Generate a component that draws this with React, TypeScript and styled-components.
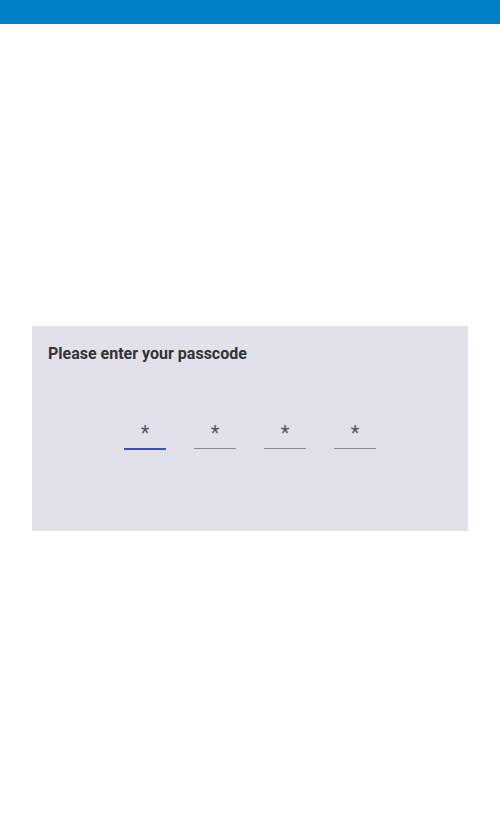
import React, { useState } from 'react'
import styled, { createGlobalStyle } from 'styled-components'

const GlobalStyle = createGlobalStyle`
  html, body {
    margin: 0;
    padding: 0;
    background: #ffffff;
    font-family: Roboto, "Liberation Sans", Arial, sans-serif;
  }
  * {
    box-sizing: border-box;
  }
`

const Page = styled.div`
  min-height: 100vh;
  display: flex;
  flex-direction: column;
`

const TopBar = styled.header`
  height: 24px;
  background: #0081c7;
  flex-shrink: 0;
`

const Main = styled.main`
  flex: 1;
  display: flex;
  align-items: center;
  justify-content: center;
  padding: 0 32px;
`

const Card = styled.section`
  width: 100%;
  height: 205px;
  background: #e2e0eb;
  padding: 18px 16px 0;
`

const Title = styled.h2`
  margin: 0;
  font-size: 16px;
  line-height: 20px;
  font-weight: 700;
  color: #333333;
`

const CodeRow = styled.div`
  display: flex;
  justify-content: center;
  align-items: flex-start;
  gap: 28px;
  margin-top: 54px;
`

const Digit = styled.input<{ $active: boolean }>`
  box-sizing: content-box;
  width: 42px;
  height: 30px;
  padding: 0;
  margin: 0;
  border: 0;
  border-bottom: ${({ $active }) => ($active ? '2px solid #3f51b5' : '1px solid #8c8a93')};
  background: transparent;
  text-align: center;
  font-family: Roboto, "Liberation Sans", Arial, sans-serif;
  font-size: 20px;
  color: #333333;
  outline: none;
  &::placeholder {
    color: #55545c;
  }
`

const App = () => {
  const [digits, setDigits] = useState(['', '', '', ''])
  const [active, setActive] = useState(0)

  const handleChange = (i: number, v: string) => {
    const next = [...digits]
    next[i] = v.slice(-1)
    setDigits(next)
  }

  return (
    <Page>
      <GlobalStyle />
      <TopBar />
      <Main>
        <Card>
          <Title>Please enter your passcode</Title>
          <CodeRow>
            {digits.map((d, i) => (
              <Digit
                key={i}
                type="password"
                inputMode="numeric"
                placeholder="*"
                value={d}
                $active={active === i}
                onFocus={() => setActive(i)}
                onChange={(e) => handleChange(i, e.target.value)}
              />
            ))}
          </CodeRow>
        </Card>
      </Main>
    </Page>
  )
}

export default App
